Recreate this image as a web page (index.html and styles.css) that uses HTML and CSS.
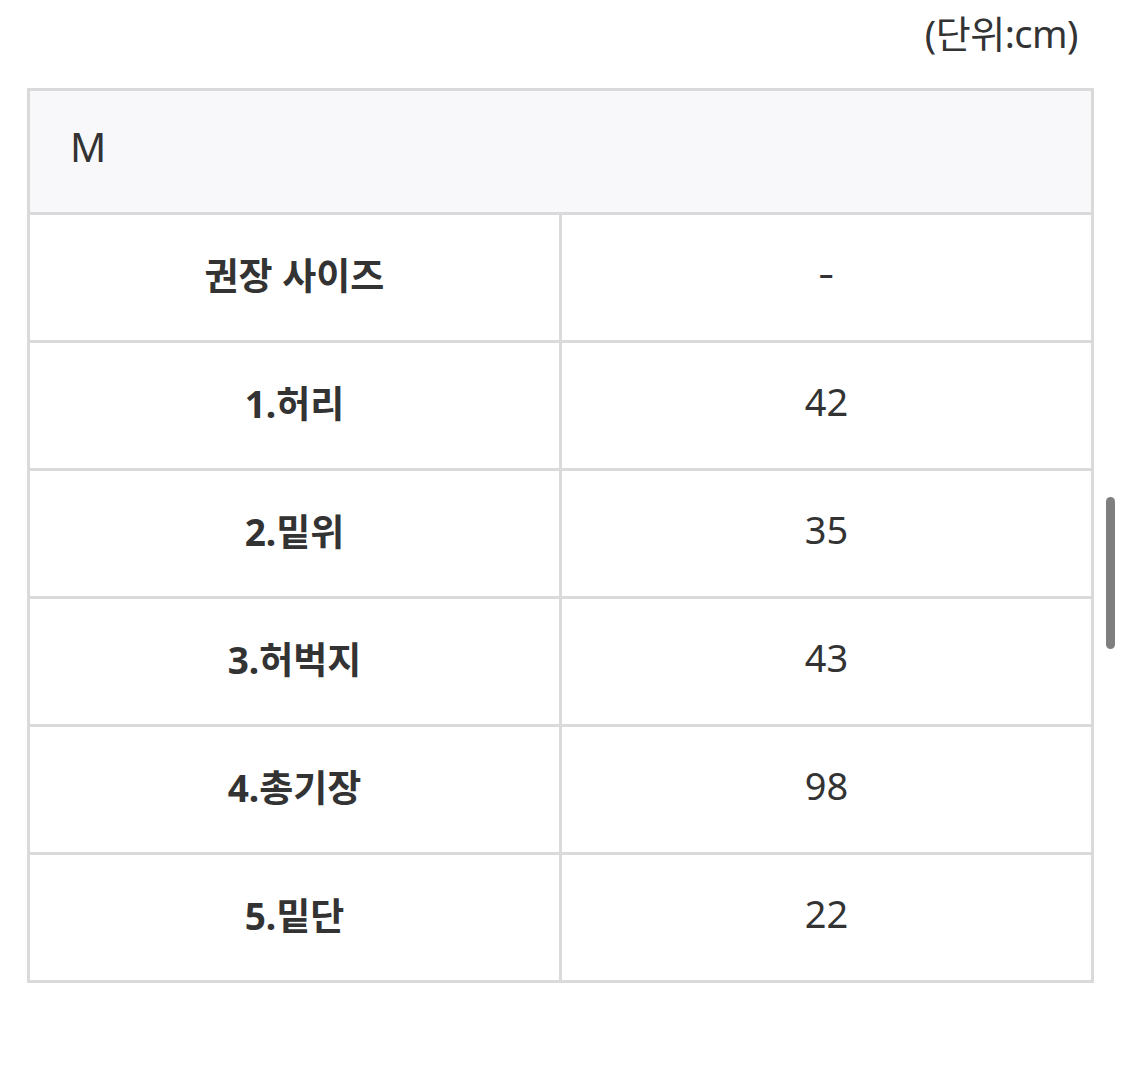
FILE: index.html
```html
<!DOCTYPE html>
<html lang="ko">
<head>
<meta charset="utf-8">
<link rel="stylesheet" href="styles.css">
</head>
<body>
<div class="page">
  <div class="unit">(단위:cm)</div>
  <div class="size-table">
    <div class="head">M</div>
    <div class="label">권장 사이즈</div><div class="value dash"><span class="dash-glyph">-</span></div>
    <div class="label">1.허리</div><div class="value">42</div>
    <div class="label">2.밑위</div><div class="value">35</div>
    <div class="label">3.허벅지</div><div class="value">43</div>
    <div class="label">4.총기장</div><div class="value">98</div>
    <div class="label">5.밑단</div><div class="value">22</div>
  </div>
</div>
<div class="scroll-indicator"></div>
</body>
</html>
```

FILE: styles.css
```css
html, body {
  margin: 0;
  padding: 0;
  background: #ffffff;
}
body {
  font-family: "Noto Sans", "Noto Sans CJK KR", sans-serif;
  color: #333333;
  width: 1125px;
  height: 1068px;
  overflow: hidden;
}
.page {
  padding: 0 31px 0 27px;
}
.unit {
  height: 66px;
  line-height: 66px;
  font-size: 38px;
  text-align: right;
  padding-right: 16px;
  margin-bottom: 22px;
  letter-spacing: -0.5px;
}
.size-table {
  display: grid;
  grid-template-columns: 1fr 1fr;
  grid-template-rows: 124px;
  grid-auto-rows: 128px;
  border-top: 3px solid #dadada;
  border-left: 3px solid #dadada;
}
.size-table > div {
  border-right: 3px solid #dadada;
  border-bottom: 3px solid #dadada;
  display: flex;
  align-items: center;
  font-size: 37px;
}
.size-table > .head {
  grid-column: 1 / span 2;
  background: #f8f8fa;
  padding-left: 40px;
  padding-bottom: 10px;
  font-size: 40px;
}
.size-table > .label {
  justify-content: center;
  font-weight: 700;
  padding-bottom: 8px;
}
.size-table > .value {
  justify-content: center;
  font-weight: 400;
  font-size: 38px;
  padding-bottom: 10px;
}
.size-table > .dash {
  padding-bottom: 12px;
}
.dash-glyph {
  display: inline-block;
  transform: scaleX(1.3);
}
.scroll-indicator {
  position: fixed;
  left: 1106px;
  top: 497px;
  width: 9px;
  height: 152px;
  border-radius: 5px;
  background: #7f7f7f;
}
```
